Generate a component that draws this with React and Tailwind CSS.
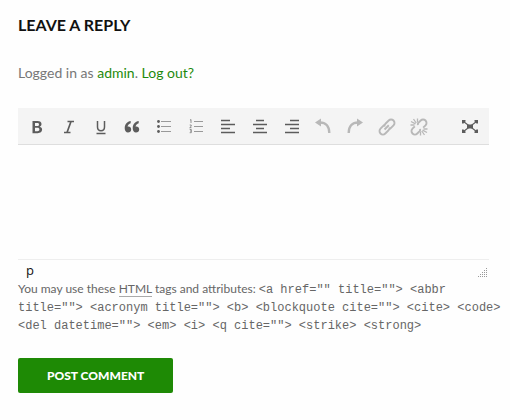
import { useState } from 'react';

const allowedTags =
  '<a href="" title=""> <abbr title=""> <acronym title=""> <b> <blockquote cite=""> <cite> <code> <del datetime=""> <em> <i> <q cite=""> <strike> <strong>';

const tools = [
  {
    label: 'Bold',
    icon: (
      <path
        fill="currentColor"
        fillRule="evenodd"
        d="M5.500 4h5c2.600 0 4 1.200 4 3.100 0 1.300-.7 2.200-1.800 2.600 1.500.4 2.400 1.400 2.400 2.900 0 2.300-1.700 3.600-4.500 3.600H5.500zM8 6v2.900h2.100c1.200 0 1.900-.5 1.900-1.500S11.300 6 10.100 6zm0 4.800v3.400h2.400c1.300 0 2-.6 2-1.700s-.7-1.700-2-1.700z"
      />
    ),
  },
  {
    label: 'Italic',
    icon: <path fill="none" stroke="currentColor" strokeWidth="1.700" d="M8.500 4.500h6.500M5 15.500h6.500M12 4.500l-4 11" />,
  },
  {
    label: 'Underline',
    icon: <path fill="none" stroke="currentColor" strokeWidth="1.500" d="M6.500 4v6c0 2.500 1.200 3.700 3.500 3.700s3.500-1.200 3.500-3.700V4M5.500 16.500h9" />,
  },
  {
    label: 'Blockquote',
    icon: (
      <path
        fill="currentColor"
        d="M8.700 4C5.300 4.500 2.700 7.300 2.700 11.300c0 2.600 1.300 4.200 3.300 4.200 1.800 0 3.200-1.300 3.200-3.100s-1.200-3-2.900-3c-.3 0-.6 0-.8.1.4-1.500 1.600-2.700 3.200-3.200zM16.700 4c-3.400.5-6 3.300-6 7.300 0 2.600 1.300 4.200 3.300 4.200 1.800 0 3.200-1.300 3.200-3.100s-1.200-3-2.900-3c-.3 0-.6 0-.8.1.4-1.500 1.600-2.700 3.200-3.200z"
      />
    ),
  },
  {
    label: 'Bulleted list',
    icon: (
      <>
        <path fill="none" stroke="currentColor" opacity=".6" d="M7 4.500h10M7 9.500h10M7 14.500h10" />
        <g fill="currentColor">
          <circle cx="4.500" cy="4.500" r="1.400" />
          <circle cx="4.500" cy="9.500" r="1.400" />
          <circle cx="4.500" cy="14.500" r="1.400" />
        </g>
      </>
    ),
  },
  {
    label: 'Numbered list',
    icon: (
      <g fill="none" stroke="currentColor">
        <path opacity=".6" d="M8 4.500h9M8 9.500h9M8 14.500h9" />
        <path strokeWidth=".8" opacity=".8" d="M4 3.200l1-.7V6M3.700 8h1.500v1.300l-1.500 1.400h1.800M3.700 12.500h1.600v3.200H3.700M4 14h1.300" />
      </g>
    ),
  },
  {
    label: 'Align left',
    icon: <path fill="none" stroke="currentColor" strokeWidth="1.500" d="M3 3.500h9M3 7.500h14M3 11.500h9M3 15.500h14" />,
  },
  {
    label: 'Align center',
    icon: <path fill="none" stroke="currentColor" strokeWidth="1.500" d="M6 3.500h8M3 7.500h14M6 11.500h8M3 15.500h14" />,
  },
  {
    label: 'Align right',
    icon: <path fill="none" stroke="currentColor" strokeWidth="1.500" d="M8 3.500h9M3 7.500h14M8 11.500h9M3 15.500h14" />,
  },
  {
    label: 'Undo',
    disabled: true,
    icon: (
      <>
        <path fill="currentColor" d="M8 1.500v8L2 5.500z" />
        <path fill="none" stroke="currentColor" strokeWidth="2.400" d="M7 5.500c5.500 0 9.300 3.500 9.300 10.500" />
      </>
    ),
  },
  {
    label: 'Redo',
    disabled: true,
    icon: (
      <>
        <path fill="currentColor" d="M12 1.500v8l6-4z" />
        <path fill="none" stroke="currentColor" strokeWidth="2.400" d="M13 5.500C7.500 5.500 3.700 9 3.700 16" />
      </>
    ),
  },
  {
    label: 'Insert link',
    disabled: true,
    icon: (
      <g fill="none" stroke="currentColor" strokeWidth="1.900" transform="rotate(-45 10 10)">
        <path d="M12.500 10H6.500" />
        <path d="M9.500 6.600H4.200a3.400 3.400 0 0 0 0 6.800h4.600a3.400 3.400 0 0 0 2.800-1.400" />
        <path d="M10.500 13.400h5.300a3.400 3.400 0 0 0 0-6.800h-4.600a3.400 3.400 0 0 0-2.800 1.400" />
      </g>
    ),
  },
  {
    label: 'Remove link',
    disabled: true,
    icon: (
      <g fill="none" stroke="currentColor" strokeWidth="1.900">
        <g transform="rotate(-45 10 10)">
          <path d="M7.500 6.600H4.200a3.400 3.400 0 0 0 0 6.800h3a2.800 2.800 0 0 0 2.300-1.300" />
          <path d="M12.500 13.400h3.300a3.400 3.400 0 0 0 0-6.800h-3a2.800 2.800 0 0 0-2.300 1.300" />
        </g>
        <path strokeWidth="1.300" d="M2 4.500l4.500 2.300M4.500 2l2.700 4M8.500 1.500v4M1.500 8h4M18 15.500l-4.500-2.300M15.500 18l-2.700-4M11.500 18.500v-4M18.500 12h-4" />
      </g>
    ),
  },
];

function ToolButton({ label, disabled, children }) {
  return (
    <button
      type="button"
      title={label}
      aria-label={label}
      disabled={disabled}
      className="flex h-7 w-7 items-center justify-center text-[#5c5c5c] disabled:text-[#b8b8b8]"
    >
      <svg viewBox="0 0 20 20" className="h-5 w-5" aria-hidden="true">
        {children}
      </svg>
    </button>
  );
}

function Toolbar() {
  return (
    <div role="toolbar" aria-label="Formatting" className="flex items-center border-b border-[#dedede] bg-[#f4f4f4] px-[5px] pt-[5px] pb-[3px]">
      <div className="flex max-w-[410px] flex-1 justify-between">
        {tools.map((tool) => (
          <ToolButton key={tool.label} label={tool.label} disabled={tool.disabled}>
            {tool.icon}
          </ToolButton>
        ))}
      </div>
      <div className="ml-auto">
        <ToolButton label="Fullscreen">
          <path fill="none" stroke="currentColor" strokeWidth="1.100" d="M3.500 4.500l13 10M16.500 4.500l-13 10" />
          <path fill="currentColor" d="M7 7.500h6v4H7zM2 3h3.500v1.500L3.500 6.500H2zM18 3h-3.500v1.500l2 2H18zM2 16h3.500v-1.500l-2-2H2zM18 16h-3.500v-1.500l2-2H18z" />
        </ToolButton>
      </div>
    </div>
  );
}

export default function App() {
  const [comment, setComment] = useState('');

  return (
    <section className="bg-[#fefefe] pt-4 pr-[21px] pb-7 pl-[18px] font-['Lato',sans-serif] text-[#777]">
      <h3 className="text-base leading-[18px] font-bold text-[#111]">LEAVE A REPLY</h3>
      <p className="mt-7 text-sm leading-[22px]">
        Logged in as{' '}
        <a href="#profile" className="text-[#1e8a0c]">
          admin
        </a>
        .{' '}
        <a href="#logout" className="text-[#1e8a0c]">
          Log out?
        </a>
      </p>

      <form className="mt-6" onSubmit={(e) => e.preventDefault()}>
        <Toolbar />
        <textarea
          aria-label="Comment"
          value={comment}
          onChange={(e) => setComment(e.target.value)}
          className="block h-[114px] w-full resize-none p-2 text-sm text-[#333] outline-none"
        />
        <div className="flex h-[21px] items-center justify-between border-t border-[#eee] pr-[2px] pl-2">
          <span className="font-['Open_Sans',sans-serif] text-[13px] leading-5 text-[#111]">p</span>
          <svg viewBox="0 0 10 10" className="mt-1 h-[10px] w-[10px] text-[#999]" aria-hidden="true">
            <path
              fill="none"
              stroke="currentColor"
              strokeDasharray="1 1"
              d="M9.500 10V0M7.500 10V2M5.500 10V4M3.500 10V6M1.500 10V8"
            />
          </svg>
        </div>

        <p className="-mr-3 text-xs leading-[18px] text-[#666]">
          You may use these{' '}
          <abbr title="HyperText Markup Language" className="border-b border-[#aaa] no-underline">
            HTML
          </abbr>{' '}
          tags and attributes: <code className="font-['Liberation_Mono',monospace] text-xs">{allowedTags}</code>
        </p>

        <button type="submit" className="mt-6 h-[35px] rounded-[2px] bg-[#1e8a05] px-[29px] text-xs font-black text-white">
          POST COMMENT
        </button>
      </form>
    </section>
  );
}
